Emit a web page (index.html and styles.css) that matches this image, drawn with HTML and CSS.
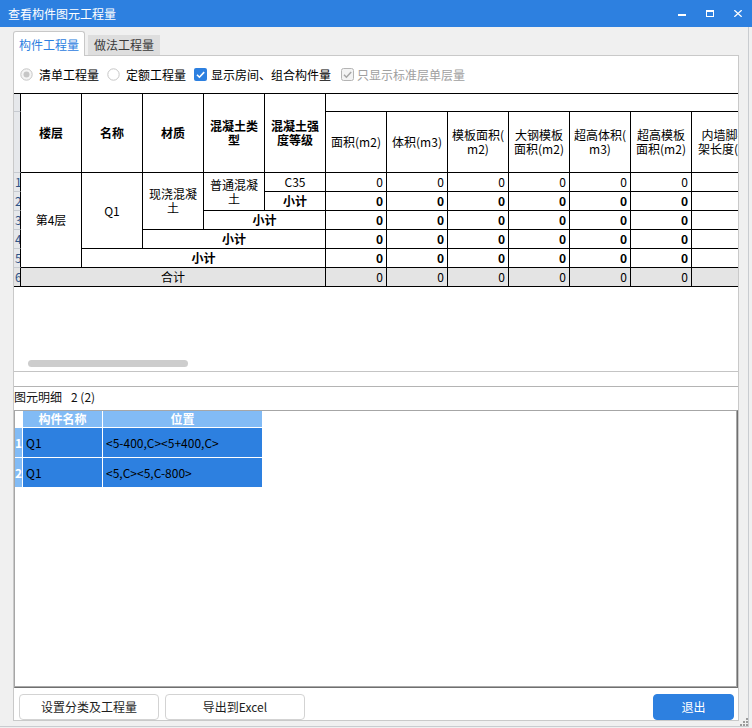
FILE: index.html
```html
<!DOCTYPE html>
<html lang="zh-CN">
<head>
<meta charset="utf-8">
<title>查看构件图元工程量</title>
<link rel="stylesheet" href="styles.css">
</head>
<body>
<div class="titlebar">
  <span class="title">查看构件图元工程量</span>
  <div class="controls">
    <svg class="ctl" width="8" height="7" viewBox="0 0 8 7"><rect x="0" y="4" width="8" height="2" fill="#fff"/></svg>
    <svg class="ctl" width="8" height="7" viewBox="0 0 8 7"><rect x="0.5" y="0.5" width="7" height="6" fill="none" stroke="#fff"/><rect x="0" y="0" width="8" height="2" fill="#fff"/></svg>
    <svg class="ctl" width="8" height="7" viewBox="0 0 8 7"><path d="M0.3 0.2L7.7 6.8M7.7 0.2L0.3 6.8" stroke="#fff" stroke-width="1.3"/></svg>
  </div>
</div>
<div class="frame">
  <div class="tabs">
    <div class="tab active">构件工程量</div>
    <div class="tab">做法工程量</div>
  </div>
  <div class="main">
    <div class="upper">
      <div class="options">
        <label class="opt radio">
          <svg width="13" height="13" viewBox="0 0 13 13"><circle cx="6.5" cy="6.5" r="5.7" fill="#f4f4f4" stroke="#c6c6c6"/><circle cx="6.5" cy="6.5" r="3" fill="#c6c6c6"/></svg>
          <span>清单工程量</span>
        </label>
        <label class="opt radio">
          <svg width="13" height="13" viewBox="0 0 13 13"><circle cx="6.5" cy="6.5" r="5.7" fill="#fff" stroke="#c6c6c6"/></svg>
          <span>定额工程量</span>
        </label>
        <label class="opt check">
          <svg width="13" height="13" viewBox="0 0 13 13"><rect x="0" y="0" width="13" height="13" rx="2" fill="#2d80e0"/><path d="M3 6.8L5.4 9.2L10.2 4.1" fill="none" stroke="#fff" stroke-width="1.6"/></svg>
          <span>显示房间、组合构件量</span>
        </label>
        <label class="opt check disabled">
          <svg width="13" height="13" viewBox="0 0 13 13"><rect x="0.5" y="0.5" width="12" height="12" rx="2" fill="#f3f3f3" stroke="#b4b4b4"/><path d="M3 6.8L5.4 9.2L10.2 4.1" fill="none" stroke="#a6a6a6" stroke-width="1.5"/></svg>
          <span>只显示标准层单层量</span>
        </label>
      </div>

      <div class="qty">
        <!-- header row 1 -->
        <div class="rn"></div>
        <div class="h rs2">楼层</div>
        <div class="h rs2">名称</div>
        <div class="h rs2">材质</div>
        <div class="h rs2">混凝土类<br>型</div>
        <div class="h rs2">混凝土强<br>度等级</div>
        <div class="cs7"></div>
        <!-- header row 2 -->
        <div class="rn"></div>
        <div>面积(m2)</div>
        <div>体积(m3)</div>
        <div>模板面积(<br>m2)</div>
        <div>大钢模板<br>面积(m2)</div>
        <div>超高体积(<br>m3)</div>
        <div>超高模板<br>面积(m2)</div>
        <div class="clip">内墙脚手<br>架长度(m)</div>
        <!-- body row 1 -->
        <div class="rn">1</div>
        <div class="rs5">第4层</div>
        <div class="rs4">Q1</div>
        <div class="rs3">现浇混凝<br>土</div>
        <div class="rs2">普通混凝<br>土</div>
        <div>C35</div>
        <div class="v">0</div><div class="v">0</div><div class="v">0</div><div class="v">0</div><div class="v">0</div><div class="v">0</div><div></div>
        <!-- body row 2 -->
        <div class="rn">2</div>
        <div class="b">小计</div>
        <div class="v b">0</div><div class="v b">0</div><div class="v b">0</div><div class="v b">0</div><div class="v b">0</div><div class="v b">0</div><div></div>
        <!-- body row 3 -->
        <div class="rn">3</div>
        <div class="b cs2">小计</div>
        <div class="v b">0</div><div class="v b">0</div><div class="v b">0</div><div class="v b">0</div><div class="v b">0</div><div class="v b">0</div><div></div>
        <!-- body row 4 -->
        <div class="rn">4</div>
        <div class="b cs3">小计</div>
        <div class="v b">0</div><div class="v b">0</div><div class="v b">0</div><div class="v b">0</div><div class="v b">0</div><div class="v b">0</div><div></div>
        <!-- body row 5 -->
        <div class="rn">5</div>
        <div class="b cs4">小计</div>
        <div class="v b">0</div><div class="v b">0</div><div class="v b">0</div><div class="v b">0</div><div class="v b">0</div><div class="v b">0</div><div></div>
        <!-- body row 6 -->
        <div class="rn sum last">6</div>
        <div class="sum cs5">合计</div>
        <div class="v sum">0</div><div class="v sum">0</div><div class="v sum">0</div><div class="v sum">0</div><div class="v sum">0</div><div class="v sum">0</div><div class="sum"></div>
      </div>

      <div class="hscroll"><div class="thumb"></div></div>
    </div>

    <div class="gap"></div>

    <div class="lower">
      <div class="lower-title">图元明细<span class="count">2 (2)</span></div>
      <div class="grid-ctl">
        <div class="detail">
          <div class="corner"></div>
          <div class="dh">构件名称</div>
          <div class="dh">位置</div>
          <div class="drn">1</div>
          <div class="dc">Q1</div>
          <div class="dc">&lt;5-400,C&gt;&lt;5+400,C&gt;</div>
          <div class="drn">2</div>
          <div class="dc">Q1</div>
          <div class="dc">&lt;5,C&gt;&lt;5,C-800&gt;</div>
        </div>
      </div>
    </div>

    <div class="footer">
      <button class="btn">设置分类及工程量</button>
      <button class="btn">导出到Excel</button>
      <button class="btn primary">退出</button>
    </div>
  </div>
  <svg class="grip" width="8" height="8" viewBox="0 0 8 8">
    <rect x="6" y="0" width="2" height="2" fill="#9c9c9c"/>
    <rect x="3" y="3" width="2" height="2" fill="#9c9c9c"/>
    <rect x="6" y="3" width="2" height="2" fill="#9c9c9c"/>
    <rect x="0" y="6" width="2" height="2" fill="#9c9c9c"/>
    <rect x="3" y="6" width="2" height="2" fill="#9c9c9c"/>
    <rect x="6" y="6" width="2" height="2" fill="#9c9c9c"/>
  </svg>
</div>
</body>
</html>
```

FILE: styles.css
```css
* { box-sizing: border-box; }

html, body {
  margin: 0;
  padding: 0;
  background: #f0f0f0;
  font-family: "Noto Sans CJK SC", "Noto Sans", sans-serif;
  font-size: 12px;
  color: #000;
}

body {
  width: 752px;
  height: 728px;
  overflow: hidden;
}

.titlebar {
  height: 27px;
  width: 752px;
  background: #2d80e0;
  display: flex;
  align-items: center;
  padding-left: 8px;
  padding-right: 10px;
  color: #fff;
}

.title {
  font-size: 12px;
  line-height: 14px;
}

.controls {
  margin-left: auto;
  display: flex;
  align-items: center;
  gap: 20px;
}

.ctl { display: block; }

.frame {
  position: relative;
  width: 749px;
  height: 700px;
  border-right: 1px solid #c9ccd0;
  border-bottom: 1px solid #c9ccd0;
}

.tabs {
  height: 28px;
  display: flex;
  align-items: flex-end;
  padding-left: 13px;
  gap: 3px;
}

.tab {
  width: 72px;
  height: 20px;
  background: #dedede;
  color: #3a3a3a;
  display: flex;
  align-items: center;
  justify-content: center;
  line-height: 14px;
}

.tab.active {
  height: 25px;
  margin-bottom: -1px;
  background: #fff;
  color: #2d80e0;
  border: 1px solid #c8c8c8;
  border-bottom: none;
  border-radius: 3px 3px 0 0;
  position: relative;
  z-index: 1;
  padding-top: 1px;
}

.main {
  margin-left: 13px;
  width: 726px;
  height: 666px;
  border: 1px solid #c9c9c9;
  background: #fff;
  display: flex;
  flex-direction: column;
  overflow: hidden;
}

.upper {
  height: 316px;
  flex: none;
  border-bottom: 1px solid #c4c4c4;
  display: flex;
  flex-direction: column;
  overflow: hidden;
}

.options {
  height: 37px;
  flex: none;
  display: flex;
  align-items: center;
  padding-left: 6px;
  gap: 8px;
  line-height: 14px;
}

.opt {
  display: flex;
  align-items: center;
  gap: 6px;
}

.opt svg { display: block; flex: none; }

.opt.check { gap: 4px; }
.opt.disabled { gap: 3px; margin-left: 2px; color: #a0a0a0; }

.qty {
  display: grid;
  grid-template-columns: 7px repeat(12, 61px);
  grid-template-rows: 18px 61px repeat(6, 19px);
  width: max-content;
  border-top: 1px solid #000;
  font-size: 12px;
  line-height: 14px;
  flex: none;
}

.qty > div {
  border-right: 1px solid #000;
  border-bottom: 1px solid #000;
  display: flex;
  align-items: center;
  justify-content: center;
  text-align: center;
  overflow: hidden;
  white-space: nowrap;
  background: #fff;
}

.qty > .clip {
  justify-content: flex-start;
  padding-left: 6px;
}

.qty > .rn {
  background: #e6e8eb;
  border-bottom-color: #c6cad0;
  justify-content: flex-start;
  padding-left: 1px;
  color: #2f5385;
  font-size: 12px;
}

.qty > .rn.last { border-bottom-color: #000; }

.qty > .h { font-weight: 700; }
.qty > .b { font-weight: 700; }
.qty > .v { justify-content: flex-end; padding-right: 3px; }
.qty > .sum { background: #e4e4e4; }

.rs2 { grid-row: span 2; }
.rs3 { grid-row: span 3; }
.rs4 { grid-row: span 4; }
.rs5 { grid-row: span 5; }
.cs2 { grid-column: span 2; }
.cs3 { grid-column: span 3; }
.cs4 { grid-column: span 4; }
.cs5 { grid-column: span 5; }
.cs7 { grid-column: span 7; }

.hscroll {
  margin-top: auto;
  padding: 0 0 4px 14px;
  flex: none;
}

.thumb {
  width: 160px;
  height: 7px;
  border-radius: 4px;
  background: #cdcdcd;
}

.gap {
  height: 14px;
  flex: none;
}

.lower {
  flex: none;
  border-top: 1px solid #b4b4b4;
  display: flex;
  flex-direction: column;
}

.lower-title {
  height: 23px;
  line-height: 19px;
  padding-left: 0;
  color: #111;
  white-space: pre;
}

.count { margin-left: 9px; }

.grid-ctl {
  height: 278px;
  border-top: 1px solid #a6a6a6;
  border-left: 1px solid #a6a6a6;
  border-right: 1px solid #6f6f6f;
  border-bottom: 1px solid #6f6f6f;
  box-shadow: inset -1px -1px 0 #a9a9a9;
  background: #fff;
}

.detail {
  display: grid;
  grid-template-columns: 7px 79px 159px;
  grid-template-rows: 16px 29px 29px;
  gap: 1px;
  width: max-content;
}

.dh {
  background: #82bbf5;
  color: #fff;
  font-weight: 700;
  display: flex;
  align-items: center;
  justify-content: center;
  line-height: 14px;
}

.drn {
  background: #82bbf5;
  color: #fff;
  font-weight: 700;
  display: flex;
  align-items: center;
  justify-content: center;
  line-height: 14px;
}

.dc {
  background: #2d80e0;
  color: #000;
  display: flex;
  align-items: center;
  padding-left: 3px;
  line-height: 14px;
  white-space: nowrap;
}

.footer {
  height: 32px;
  flex: none;
  display: flex;
  align-items: flex-start;
  padding: 6px 4px 0 5px;
  gap: 6px;
}

.btn {
  width: 140px;
  height: 26px;
  background: #fff;
  border: 1px solid #d3d3d3;
  border-radius: 4px;
  font-family: "Noto Sans CJK SC", "Noto Sans", sans-serif;
  font-size: 12px;
  line-height: 14px;
  color: #1e1e1e;
  padding: 0;
}

.btn.primary {
  width: 81px;
  margin-left: auto;
  background: #2d80e0;
  border-color: #2d80e0;
  color: #fff;
}

.grip {
  position: absolute;
  right: 0;
  bottom: 0;
  display: block;
}
```
